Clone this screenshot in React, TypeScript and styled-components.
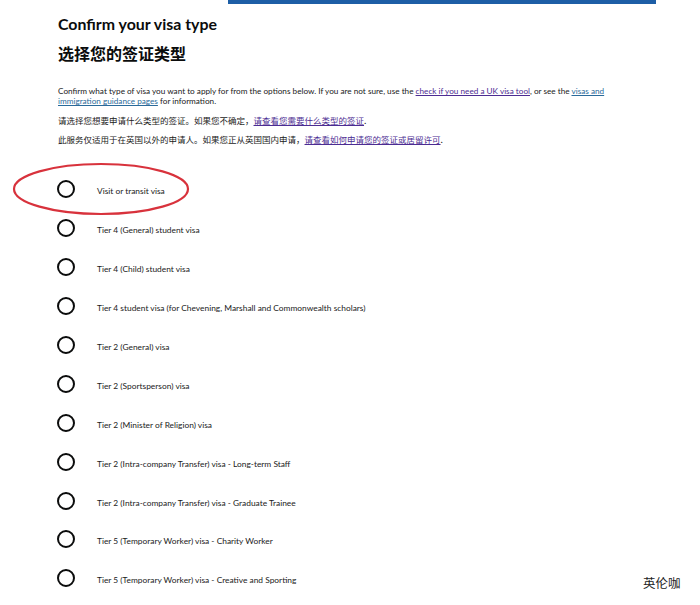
import React from "react";
import styled, { createGlobalStyle } from "styled-components";

const GlobalStyle = createGlobalStyle`
  html, body { margin: 0; padding: 0; background: #ffffff; }
  body { font-family: Lato, "Noto Sans", "Noto Sans CJK SC", sans-serif; color: #0b0c0c; }
`;

const Page = styled.div`
  position: relative;
  width: 700px;
  height: 605px;
  overflow: hidden;
  background: #ffffff;
`;

const TopBar = styled.div`
  margin-left: 228px;
  width: 428px;
  height: 4px;
  background: #1d5ea6;
`;

const Main = styled.main`
  display: flex;
  flex-direction: column;
  padding-left: 58px;
`;

const Title = styled.h1`
  margin: 10px 0 0;
  font-family: Lato, "Noto Sans CJK SC", sans-serif;
  font-size: 15.9px;
  line-height: 20px;
  font-weight: 700;
  color: #0b0c0c;
`;

const SubTitle = styled.h2`
  margin: 9px 0 0;
  font-family: "Noto Sans CJK SC", sans-serif;
  font-size: 16px;
  line-height: 20px;
  font-weight: 700;
  color: #0b0c0c;
`;

const Intro = styled.p`
  margin: 23px 0 0;
  font-size: 8.2px;
  line-height: 10px;
  white-space: nowrap;
  color: #1a1a1a;
`;

const CnLine = styled.p`
  margin: 9px 0 0;
  font-family: "Noto Sans CJK SC", sans-serif;
  font-size: 8.5px;
  line-height: 10px;
  white-space: nowrap;
  color: #1a1a1a;
`;

const Link = styled.a<{ $tone?: "purple" | "blue" }>`
  color: ${(p) => (p.$tone === "blue" ? "#2a6a9a" : "#4c2c92")};
  text-decoration: underline;
`;

const RadioList = styled.div`
  display: flex;
  flex-direction: column;
  margin-top: 26px;
`;

const Row = styled.label`
  display: flex;
  align-items: center;
  height: 38.9px;
`;

const Circle = styled.span`
  box-sizing: border-box;
  width: 18px;
  height: 18px;
  border: 2px solid #0b0c0c;
  border-radius: 50%;
  margin-left: -1px;
  flex: none;
`;

const RowText = styled.span`
  margin-left: 22px;
  padding-top: 4px;
  font-size: 8.4px;
  color: #1a1a1a;
`;

const Annotation = styled.svg`
  position: absolute;
  left: 0;
  top: 0;
  pointer-events: none;
`;

const Watermark = styled.div`
  position: absolute;
  left: 643px;
  top: 573px;
  font-family: "Noto Sans CJK SC", sans-serif;
  font-size: 12.5px;
  color: #222;
`;

const options = [
  "Visit or transit visa",
  "Tier 4 (General) student visa",
  "Tier 4 (Child) student visa",
  "Tier 4 student visa (for Chevening, Marshall and Commonwealth scholars)",
  "Tier 2 (General) visa",
  "Tier 2 (Sportsperson) visa",
  "Tier 2 (Minister of Religion) visa",
  "Tier 2 (Intra-company Transfer) visa - Long-term Staff",
  "Tier 2 (Intra-company Transfer) visa - Graduate Trainee",
  "Tier 5 (Temporary Worker) visa - Charity Worker",
  "Tier 5 (Temporary Worker) visa - Creative and Sporting",
];

export default function App() {
  return (
    <>
      <GlobalStyle />
      <Page>
        <TopBar />
        <Main>
          <Title>Confirm your visa type</Title>
          <SubTitle>选择您的签证类型</SubTitle>
          <Intro>
            Confirm what type of visa you want to apply for from the options below. If you are not sure, use the{" "}
            <Link>check if you need a UK visa tool</Link>, or see the <Link $tone="blue">visas and</Link>
            <br />
            <Link $tone="blue">immigration guidance pages</Link> for information.
          </Intro>
          <CnLine>
            请选择您想要申请什么类型的签证。如果您不确定，<Link>请查看您需要什么类型的签证</Link>.
          </CnLine>
          <CnLine>
            此服务仅适用于在英国以外的申请人。如果您正从英国国内申请，<Link>请查看如何申请您的签证或居留许可</Link>.
          </CnLine>
          <RadioList>
            {options.map((o) => (
              <Row key={o}>
                <Circle />
                <RowText>{o}</RowText>
              </Row>
            ))}
          </RadioList>
        </Main>
        <Annotation width="700" height="605" viewBox="0 0 700 605">
          <ellipse cx="101" cy="189" rx="87" ry="25" fill="none" stroke="#d8323c" strokeWidth="2.2" />
        </Annotation>
        <Watermark>英伦咖</Watermark>
      </Page>
    </>
  );
}
